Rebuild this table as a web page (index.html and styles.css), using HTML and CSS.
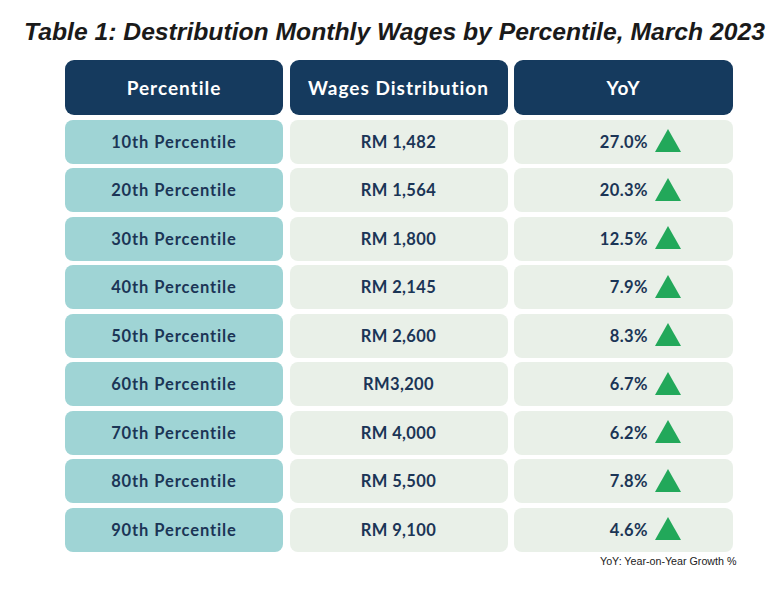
FILE: index.html
```html
<!DOCTYPE html>
<html>
<head>
<meta charset="utf-8">
<link rel="stylesheet" href="styles.css">
</head>
<body>
<h1 class="title">Table 1: Destribution Monthly Wages by Percentile, March 2023</h1>
<div class="table">
  <div class="head">Percentile</div>
  <div class="head">Wages Distribution</div>
  <div class="head">YoY</div>

  <div class="cell pct">10th Percentile</div>
  <div class="cell val">RM 1,482</div>
  <div class="cell yoy"><span class="num">27.0%</span><span class="tri"></span></div>

  <div class="cell pct">20th Percentile</div>
  <div class="cell val">RM 1,564</div>
  <div class="cell yoy"><span class="num">20.3%</span><span class="tri"></span></div>

  <div class="cell pct">30th Percentile</div>
  <div class="cell val">RM 1,800</div>
  <div class="cell yoy"><span class="num">12.5%</span><span class="tri"></span></div>

  <div class="cell pct">40th Percentile</div>
  <div class="cell val">RM 2,145</div>
  <div class="cell yoy"><span class="num">7.9%</span><span class="tri"></span></div>

  <div class="cell pct">50th Percentile</div>
  <div class="cell val">RM 2,600</div>
  <div class="cell yoy"><span class="num">8.3%</span><span class="tri"></span></div>

  <div class="cell pct">60th Percentile</div>
  <div class="cell val">RM3,200</div>
  <div class="cell yoy"><span class="num">6.7%</span><span class="tri"></span></div>

  <div class="cell pct">70th Percentile</div>
  <div class="cell val">RM 4,000</div>
  <div class="cell yoy"><span class="num">6.2%</span><span class="tri"></span></div>

  <div class="cell pct">80th Percentile</div>
  <div class="cell val">RM 5,500</div>
  <div class="cell yoy"><span class="num">7.8%</span><span class="tri"></span></div>

  <div class="cell pct">90th Percentile</div>
  <div class="cell val">RM 9,100</div>
  <div class="cell yoy"><span class="num">4.6%</span><span class="tri"></span></div>
</div>
<p class="note">YoY: Year-on-Year Growth %</p>
</body>
</html>
```
FILE: styles.css
```css
html, body {
  margin: 0;
  padding: 0;
  background: #ffffff;
}
body {
  width: 783px;
  height: 594px;
  overflow: hidden;
}
.title {
  margin: 0;
  padding: 18px 0 0 6px;
  height: 43px;
  box-sizing: border-box;
  font-family: "Liberation Sans", Arial, sans-serif;
  font-style: italic;
  font-weight: 700;
  font-size: 24.7px;
  line-height: 28px;
  color: #1a1a1a;
  text-align: center;
  white-space: nowrap;
}
.table {
  margin: 17px 0 0 65px;
  width: 668px;
  display: grid;
  grid-template-columns: 218px 218px 219px;
  column-gap: 6.5px;
  grid-template-rows: 55px repeat(9, 44px);
  row-gap: 4.5px;
  font-family: Lato, "Open Sans", sans-serif;
  font-weight: 700;
}
.head {
  background: #153a5e;
  color: #ffffff;
  border-radius: 9px;
  display: flex;
  align-items: center;
  justify-content: center;
  font-size: 19px;
  letter-spacing: 1px;
}
.cell {
  border-radius: 8px;
  display: flex;
  align-items: center;
  color: #1b3556;
  font-size: 16.5px;
  letter-spacing: 0.4px;
}
.pct {
  background: #9fd4d5;
  justify-content: center;
  letter-spacing: 0.9px;
}
.val {
  background: #e9f0e8;
  justify-content: center;
}
.yoy {
  background: #e9f0e8;
  justify-content: flex-start;
}
.num {
  width: 134px;
  text-align: right;
}
.tri {
  margin-left: 7px;
  width: 0;
  height: 0;
  border-left: 13.5px solid transparent;
  border-right: 13.5px solid transparent;
  border-bottom: 23px solid #22a85a;
  margin-bottom: 2px;
}
.note {
  margin: 3px 0 0 600px;
  font-family: "Liberation Sans", Arial, sans-serif;
  font-size: 10.7px;
  color: #222222;
}
```
